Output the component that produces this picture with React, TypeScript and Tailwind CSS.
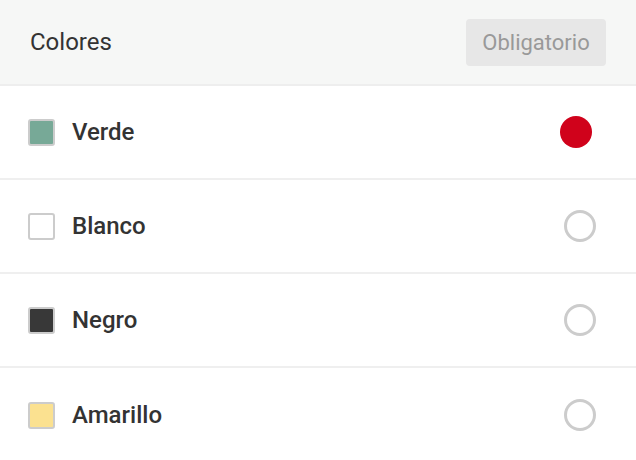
import React from "react";

const items = [
  { name: "Verde", color: "bg-[#77a997]", selected: true },
  { name: "Blanco", color: "bg-white", selected: false },
  { name: "Negro", color: "bg-[#383838]", selected: false },
  { name: "Amarillo", color: "bg-[#fbe190]", selected: false },
];

export default function App() {
  return (
    <div className="w-[636px] h-[460px] bg-white overflow-hidden" style={{ fontFamily: "Roboto, 'Noto Sans', sans-serif" }}>
      <div className="h-[86px] bg-[#f6f7f6] border-b-2 border-[#eeeeee] flex items-center justify-between pl-[30px] pr-[30px]">
        <span className="text-[24px] text-[#333333]">Colores</span>
        <div className="w-[140px] h-[47px] rounded-[4px] bg-[#e7e7e7] flex items-center justify-center text-[22px] text-[#999999]">
          Obligatorio
        </div>
      </div>
      {items.map((it, i) => (
        <div
          key={it.name}
          className={`h-[94px] flex items-center pl-[28px] pr-[40px] ${i < items.length - 1 ? "border-b-2 border-[#efefef]" : ""}`}
        >
          <div className={`w-[27px] h-[27px] rounded-[3px] border-2 border-[#cccccc] ${it.color}`} />
          <span className="ml-[17px] text-[24px] font-medium text-[#333333] flex-1">{it.name}</span>
          {it.selected ? (
            <div className="w-[32px] h-[32px] rounded-full bg-[#d0021b] mr-[4px]" />
          ) : (
            <div className="w-[32px] h-[32px] rounded-full border-[3px] border-[#cccccc]" />
          )}
        </div>
      ))}
    </div>
  );
}
